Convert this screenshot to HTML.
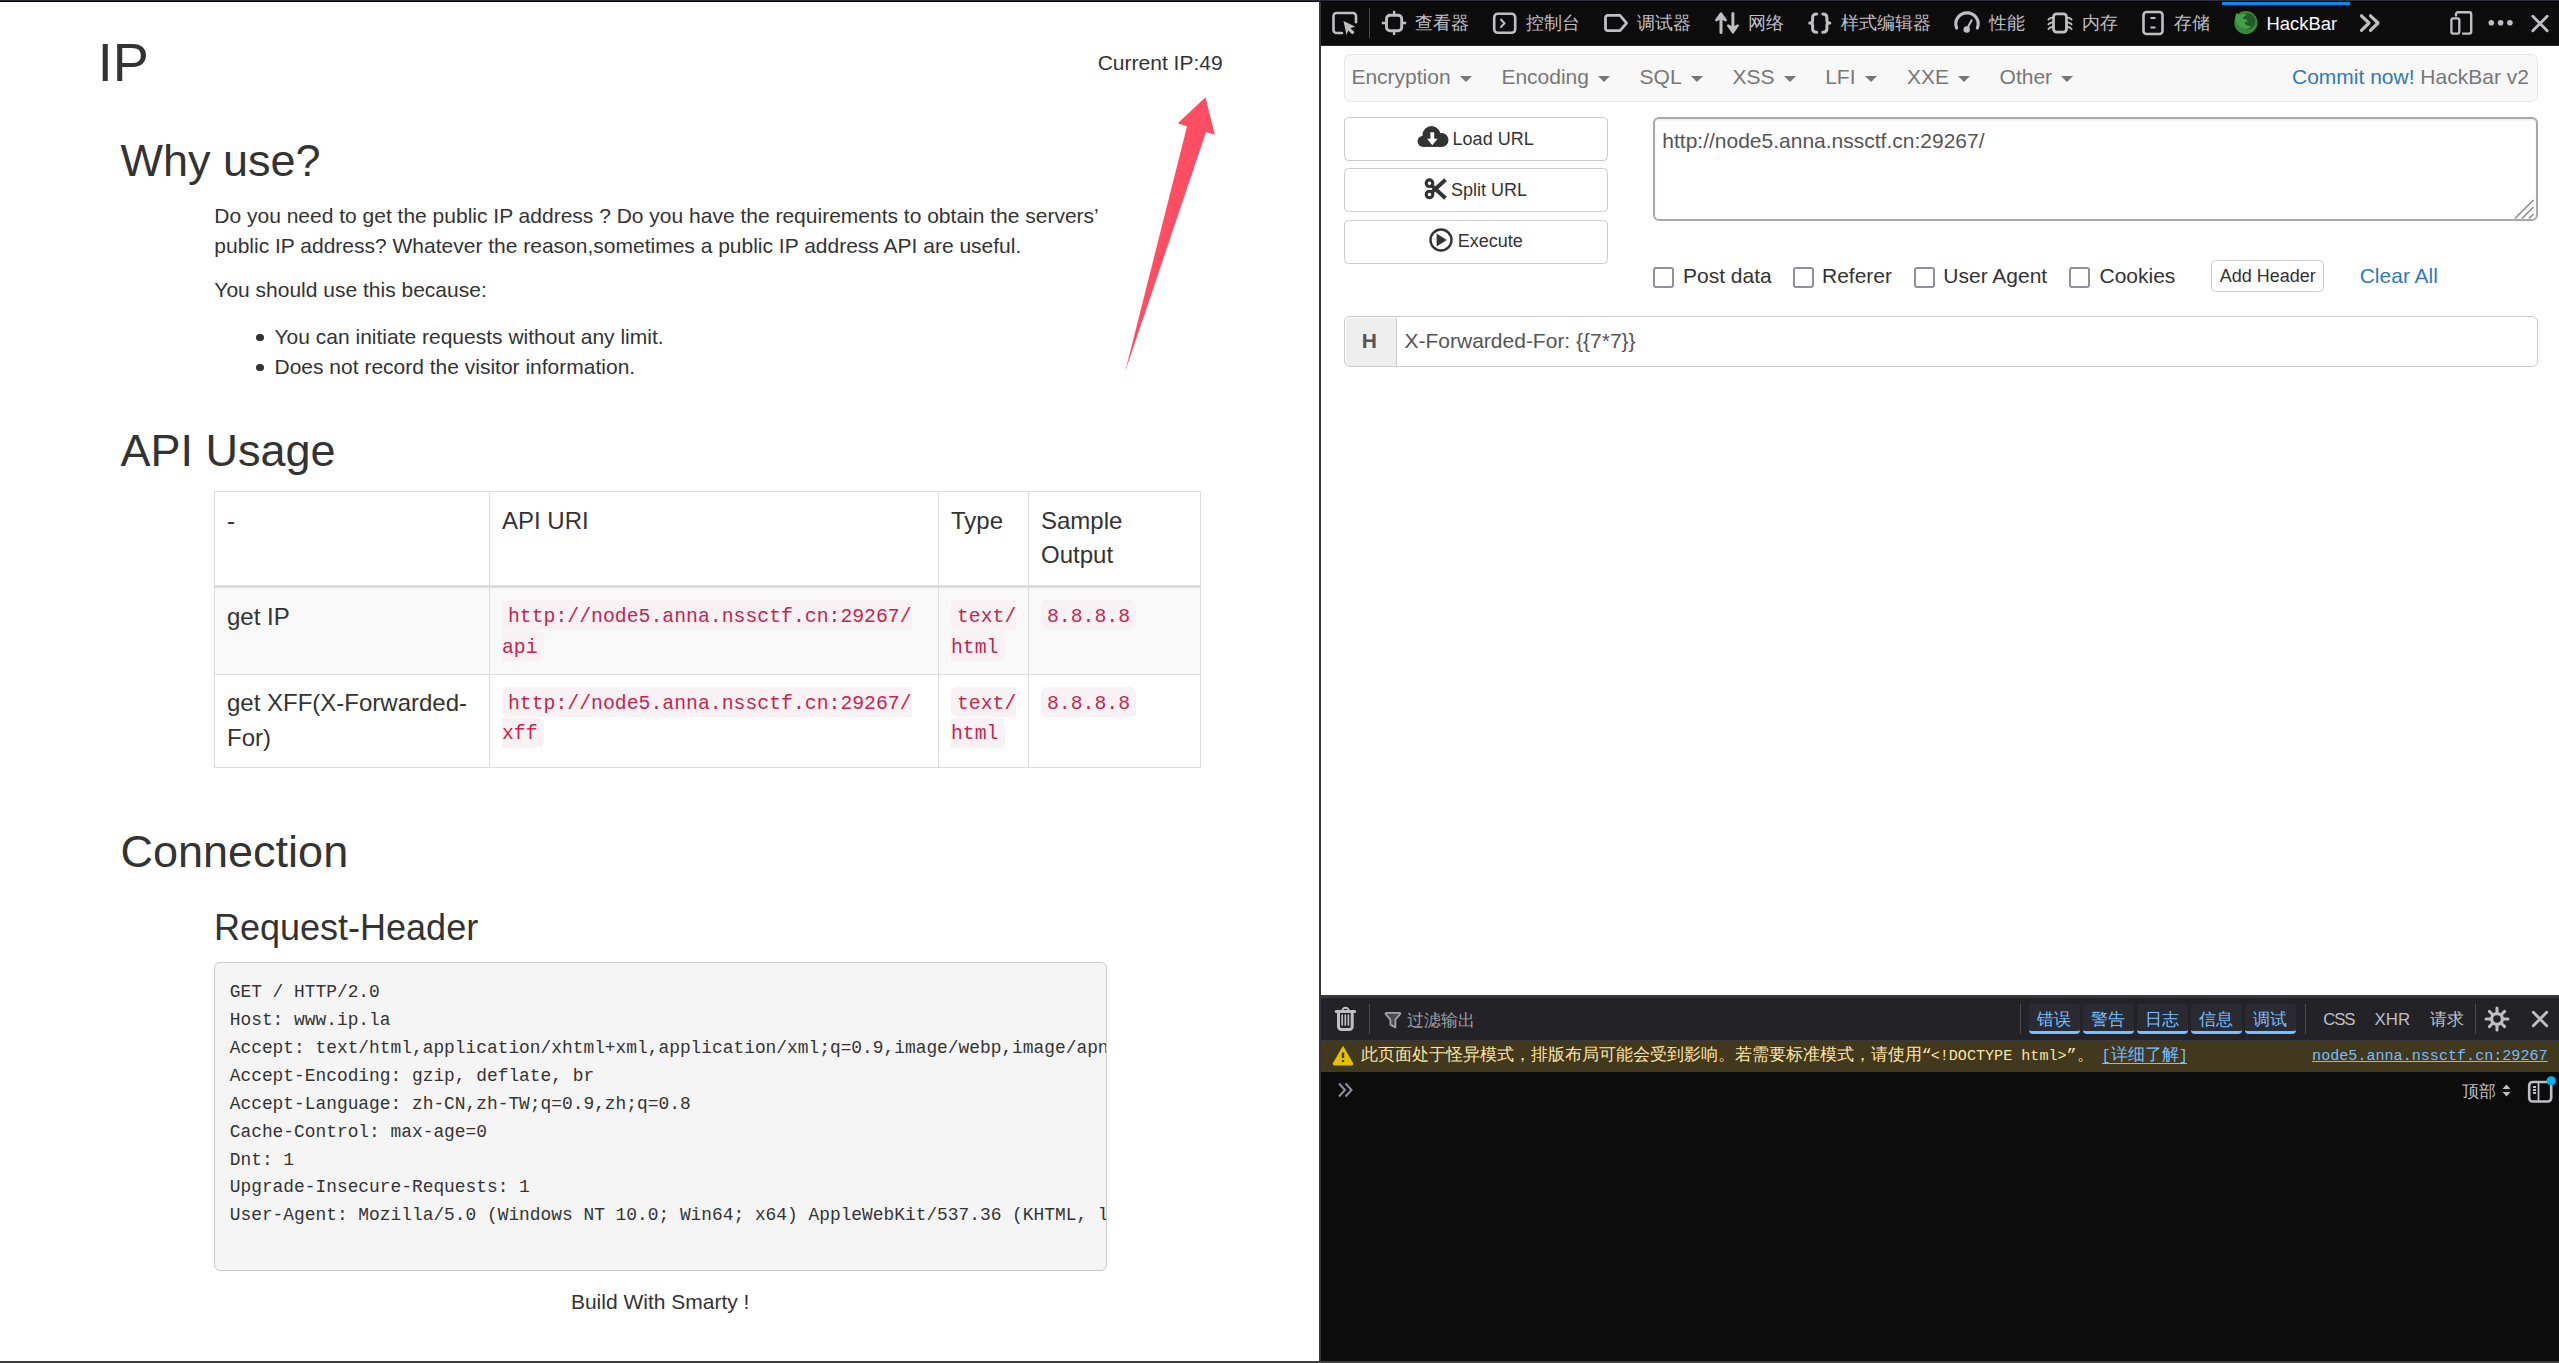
<!DOCTYPE html><html><head><meta charset="utf-8"><title>IP</title><style>
html,body{margin:0;padding:0}
body{width:2559px;height:1363px;overflow:hidden;position:relative;background:#fff;font-family:"Liberation Sans",sans-serif;}
.t{position:absolute;white-space:pre;}
.r{position:absolute;box-sizing:border-box;}
svg{position:absolute;overflow:visible}
</style></head><body>
<div class="t" style="left:97.80px;top:28.29px;font-size:54px;line-height:68px;color:#333;">IP</div>
<div class="t" style="left:1097.70px;top:49.72px;font-size:21px;line-height:26px;color:#333;">Current IP:49</div>
<div class="t" style="left:120.50px;top:133.41px;font-size:45px;line-height:56px;color:#333;">Why use?</div>
<div class="t" style="left:214.30px;top:202.72px;font-size:21px;line-height:26px;color:#333;">Do you need to get the public IP address ? Do you have the requirements to obtain the servers’</div>
<div class="t" style="left:214.30px;top:232.72px;font-size:21px;line-height:26px;color:#333;">public IP address? Whatever the reason,sometimes a public IP address API are useful.</div>
<div class="t" style="left:214.30px;top:277.42px;font-size:21px;line-height:26px;color:#333;">You should use this because:</div>
<div class="r" style="left:256.1px;top:333.5px;width:7.6px;height:7.6px;border-radius:50%;background:#333;"></div>
<div class="t" style="left:274.50px;top:323.52px;font-size:21px;line-height:26px;color:#333;">You can initiate requests without any limit.</div>
<div class="r" style="left:256.1px;top:363.5px;width:7.6px;height:7.6px;border-radius:50%;background:#333;"></div>
<div class="t" style="left:274.50px;top:353.52px;font-size:21px;line-height:26px;color:#333;">Does not record the visitor information.</div>
<div class="t" style="left:120.50px;top:423.41px;font-size:45px;line-height:56px;color:#333;">API Usage</div>
<div class="r" style="left:214px;top:491px;width:987px;height:277px;border:1px solid #ddd;"></div>
<div class="r" style="left:215px;top:588px;width:985px;height:86px;background:#f9f9f9;"></div>
<div class="r" style="left:215px;top:585px;width:985px;height:3px;background:#ddd;"></div>
<div class="r" style="left:215px;top:674px;width:985px;height:1px;background:#ddd;"></div>
<div class="r" style="left:489px;top:492px;width:1px;height:275px;background:#ddd;"></div>
<div class="r" style="left:938px;top:492px;width:1px;height:275px;background:#ddd;"></div>
<div class="r" style="left:1028px;top:492px;width:1px;height:275px;background:#ddd;"></div>
<div class="t" style="left:227.00px;top:506.38px;font-size:24px;line-height:30px;color:#333;">-</div>
<div class="t" style="left:502.00px;top:506.38px;font-size:24px;line-height:30px;color:#333;">API URI</div>
<div class="t" style="left:951.00px;top:506.38px;font-size:24px;line-height:30px;color:#333;">Type</div>
<div class="t" style="left:1041.00px;top:506.38px;font-size:24px;line-height:30px;color:#333;">Sample</div>
<div class="t" style="left:1041.00px;top:540.38px;font-size:24px;line-height:30px;color:#333;">Output</div>
<div class="t" style="left:227.00px;top:602.38px;font-size:24px;line-height:30px;color:#333;">get IP</div>
<div class="t" style="left:227.00px;top:688.18px;font-size:24px;line-height:30px;color:#333;">get XFF(X-Forwarded-</div>
<div class="t" style="left:227.00px;top:723.18px;font-size:24px;line-height:30px;color:#333;">For)</div>
<div class="r" style="left:502px;top:600.4px;width:409.92px;height:30px;background:#f9f2f4;border-radius:6px 0px 0px 6px;"></div>
<div class="t" style="left:508.00px;top:604.83px;font-size:19.8px;line-height:25px;color:#c7254e;font-family:'Liberation Mono', monospace;letter-spacing:0px;">http://node5.anna.nssctf.cn:29267/</div>
<div class="r" style="left:502px;top:631.3px;width:41.64px;height:30px;background:#f9f2f4;border-radius:0px 6px 6px 0px;"></div>
<div class="t" style="left:502.00px;top:635.63px;font-size:19.8px;line-height:25px;color:#c7254e;font-family:'Liberation Mono', monospace;letter-spacing:0px;">api</div>
<div class="r" style="left:951px;top:600.4px;width:65.4px;height:30px;background:#f9f2f4;border-radius:6px 0px 0px 6px;"></div>
<div class="t" style="left:957.00px;top:604.83px;font-size:19.8px;line-height:25px;color:#c7254e;font-family:'Liberation Mono', monospace;letter-spacing:0px;">text/</div>
<div class="r" style="left:951px;top:631.3px;width:53.52px;height:30px;background:#f9f2f4;border-radius:0px 6px 6px 0px;"></div>
<div class="t" style="left:951.00px;top:635.63px;font-size:19.8px;line-height:25px;color:#c7254e;font-family:'Liberation Mono', monospace;letter-spacing:0px;">html</div>
<div class="r" style="left:1041px;top:600.4px;width:95.16px;height:30px;background:#f9f2f4;border-radius:6px 6px 6px 6px;"></div>
<div class="t" style="left:1047.00px;top:604.83px;font-size:19.8px;line-height:25px;color:#c7254e;font-family:'Liberation Mono', monospace;letter-spacing:0px;">8.8.8.8</div>
<div class="r" style="left:502px;top:687.0px;width:409.92px;height:30px;background:#f9f2f4;border-radius:6px 0px 0px 6px;"></div>
<div class="t" style="left:508.00px;top:692.03px;font-size:19.8px;line-height:25px;color:#c7254e;font-family:'Liberation Mono', monospace;letter-spacing:0px;">http://node5.anna.nssctf.cn:29267/</div>
<div class="r" style="left:502px;top:717.9px;width:41.64px;height:30px;background:#f9f2f4;border-radius:0px 6px 6px 0px;"></div>
<div class="t" style="left:502.00px;top:722.13px;font-size:19.8px;line-height:25px;color:#c7254e;font-family:'Liberation Mono', monospace;letter-spacing:0px;">xff</div>
<div class="r" style="left:951px;top:687.0px;width:65.4px;height:30px;background:#f9f2f4;border-radius:6px 0px 0px 6px;"></div>
<div class="t" style="left:957.00px;top:692.03px;font-size:19.8px;line-height:25px;color:#c7254e;font-family:'Liberation Mono', monospace;letter-spacing:0px;">text/</div>
<div class="r" style="left:951px;top:717.9px;width:53.52px;height:30px;background:#f9f2f4;border-radius:0px 6px 6px 0px;"></div>
<div class="t" style="left:951.00px;top:722.13px;font-size:19.8px;line-height:25px;color:#c7254e;font-family:'Liberation Mono', monospace;letter-spacing:0px;">html</div>
<div class="r" style="left:1041px;top:687.0px;width:95.16px;height:30px;background:#f9f2f4;border-radius:6px 6px 6px 6px;"></div>
<div class="t" style="left:1047.00px;top:692.03px;font-size:19.8px;line-height:25px;color:#c7254e;font-family:'Liberation Mono', monospace;letter-spacing:0px;">8.8.8.8</div>
<div class="t" style="left:120.50px;top:824.41px;font-size:45px;line-height:56px;color:#333;">Connection</div>
<div class="t" style="left:214.00px;top:905.03px;font-size:36px;line-height:45px;color:#333;">Request-Header</div>
<div class="r" style="left:214px;top:962px;width:893px;height:309px;background:#f5f5f5;border:1.5px solid #ccc;border-radius:6px;"></div>
<div style="position:absolute;left:215.5px;top:963.5px;width:890px;height:306px;overflow:hidden;">
<div class="t" style="left:14.25px;top:17.84px;font-size:17.87px;line-height:22px;color:#333;font-family:'Liberation Mono', monospace;">GET / HTTP/2.0</div>
<div class="t" style="left:14.25px;top:45.70px;font-size:17.87px;line-height:22px;color:#333;font-family:'Liberation Mono', monospace;">Host: www.ip.la</div>
<div class="t" style="left:14.25px;top:73.56px;font-size:17.87px;line-height:22px;color:#333;font-family:'Liberation Mono', monospace;">Accept: text/html,application/xhtml+xml,application/xml;q=0.9,image/webp,image/apng,*/*;q=0.8</div>
<div class="t" style="left:14.25px;top:101.42px;font-size:17.87px;line-height:22px;color:#333;font-family:'Liberation Mono', monospace;">Accept-Encoding: gzip, deflate, br</div>
<div class="t" style="left:14.25px;top:129.28px;font-size:17.87px;line-height:22px;color:#333;font-family:'Liberation Mono', monospace;">Accept-Language: zh-CN,zh-TW;q=0.9,zh;q=0.8</div>
<div class="t" style="left:14.25px;top:157.14px;font-size:17.87px;line-height:22px;color:#333;font-family:'Liberation Mono', monospace;">Cache-Control: max-age=0</div>
<div class="t" style="left:14.25px;top:185.00px;font-size:17.87px;line-height:22px;color:#333;font-family:'Liberation Mono', monospace;">Dnt: 1</div>
<div class="t" style="left:14.25px;top:212.86px;font-size:17.87px;line-height:22px;color:#333;font-family:'Liberation Mono', monospace;">Upgrade-Insecure-Requests: 1</div>
<div class="t" style="left:14.25px;top:240.72px;font-size:17.87px;line-height:22px;color:#333;font-family:'Liberation Mono', monospace;">User-Agent: Mozilla/5.0 (Windows NT 10.0; Win64; x64) AppleWebKit/537.36 (KHTML, like Gecko) Chrome</div>
</div>
<div class="t" style="left:570.90px;top:1288.72px;font-size:21px;line-height:26px;color:#333;">Build With Smarty !</div>
<svg style="left:0;top:0" width="1320" height="400"><polygon points="1205.5,97.3 1214.8,134.7 1206,132.1 1125.2,371.6 1187,126.4 1177.8,123.3" fill="#ff4e64"/></svg>
<div class="r" style="left:0px;top:0px;width:2559px;height:1px;background:#2e2c36;"></div>
<div class="r" style="left:0px;top:1px;width:2559px;height:1px;background:#050508;"></div>
<div class="r" style="left:0px;top:1361px;width:2559px;height:2px;background:#3d3d3d;"></div>
<div class="r" style="left:1319px;top:2px;width:2px;height:1359px;background:#36353c;"></div>
<div class="r" style="left:1321px;top:2px;width:1238px;height:43px;background:#0c0c0d;"></div>
<div class="r" style="left:1321px;top:45px;width:1238px;height:1px;background:#2b2a33;"></div>
<svg style="left:1331px;top:11px" width="28" height="26" viewBox="0 0 28 26"><path d="M11 22 H5.5 a3 3 0 0 1 -3 -3 V5 a3 3 0 0 1 3 -3 H22 a3 3 0 0 1 3 3 V11.2" fill="none" stroke="#bfbfc3" stroke-width="2.6" stroke-linecap="round"/><path d="M12.5 10 L24 15.5 L19.5 17.2 L23.6 21.3 L21.3 23.6 L17.2 19.5 L15.5 24 Z" fill="#bfbfc3"/></svg>
<div class="r" style="left:1369px;top:8px;width:1.2px;height:30px;background:#4a4a4f;"></div>
<svg style="left:1380px;top:9px" width="28" height="28" viewBox="0 0 28 28"><rect x="6.5" y="6.3" width="15.2" height="15.4" rx="3.5" fill="none" stroke="#bfbfc3" stroke-width="2.9"/><path d="M14.1 1.8 V6 M14.1 21.7 V26 M1.8 14 H6 M21.7 14 H26.2" stroke="#bfbfc3" stroke-width="2.4"/></svg>
<div class="t" style="left:1415.00px;top:12.66px;font-size:18px;line-height:20px;color:#bfbfc3;">查看器</div>
<svg style="left:1491px;top:11px" width="28" height="25" viewBox="0 0 28 25"><rect x="3.2" y="2.8" width="21" height="19" rx="3.5" fill="none" stroke="#bfbfc3" stroke-width="2.6"/><path d="M9.5 8 L13.5 12.3 L9.5 16.6" fill="none" stroke="#bfbfc3" stroke-width="2"/></svg>
<div class="t" style="left:1525.50px;top:12.66px;font-size:18px;line-height:20px;color:#bfbfc3;">控制台</div>
<svg style="left:1602px;top:12px" width="30" height="22" viewBox="0 0 30 22"><path d="M5.7 3.4 H18 L24.6 11.05 L18 18.7 H5.7 a2.2 2.2 0 0 1 -2.2 -2.2 V5.6 a2.2 2.2 0 0 1 2.2 -2.2 Z" fill="none" stroke="#bfbfc3" stroke-width="2.8" stroke-linejoin="round"/></svg>
<div class="t" style="left:1637.00px;top:12.66px;font-size:18px;line-height:20px;color:#bfbfc3;">调试器</div>
<svg style="left:1712px;top:10px" width="30" height="26" viewBox="0 0 30 26"><path d="M9 22.4 V8 M20.9 3.5 V18" stroke="#bfbfc3" stroke-width="3" stroke-linecap="round"/><path d="M4.3 10.3 L9 3.4 L13.7 10.3 L10.6 8.7 H7.4 Z M16.2 15.6 L20.9 22.4 L25.6 15.6 L22.5 17.2 H19.3 Z" fill="#bfbfc3" stroke="#bfbfc3" stroke-width="2.4" stroke-linejoin="round"/></svg>
<div class="t" style="left:1748.00px;top:12.66px;font-size:18px;line-height:20px;color:#bfbfc3;">网络</div>
<svg style="left:1806px;top:10px" width="28" height="27" viewBox="0 0 28 27"><path d="M10.7 4 C8 4 6.6 5 6.6 7.5 V10.8 C6.6 12.3 5.6 13 3.7 13 C5.6 13 6.6 13.7 6.6 15.2 V19 C6.6 21.4 8 22.2 10.7 22.2 M16.8 4 C19.5 4 20.9 5 20.9 7.5 V10.8 C20.9 12.3 21.9 13 23.8 13 C21.9 13 20.9 13.7 20.9 15.2 V19 C20.9 21.4 19.5 22.2 16.8 22.2" fill="none" stroke="#bfbfc3" stroke-width="3" stroke-linecap="round" stroke-linejoin="round"/></svg>
<div class="t" style="left:1841.00px;top:12.66px;font-size:18px;line-height:20px;color:#bfbfc3;">样式编辑器</div>
<svg style="left:1952px;top:8px" width="30" height="27" viewBox="0 0 30 27"><path d="M4.6 20 A11.16 11.16 0 1 1 25.4 20" fill="none" stroke="#bfbfc3" stroke-width="3.2" stroke-linecap="round"/><path d="M14.7 21.5 L19.6 12.2" stroke="#bfbfc3" stroke-width="2" stroke-linecap="round"/><circle cx="14.7" cy="21.5" r="3.2" fill="#bfbfc3"/></svg>
<div class="t" style="left:1988.50px;top:12.66px;font-size:18px;line-height:20px;color:#bfbfc3;">性能</div>
<svg style="left:2046px;top:10px" width="28" height="26" viewBox="0 0 28 26"><rect x="7.5" y="3.9" width="13" height="18.2" rx="3" fill="none" stroke="#bfbfc3" stroke-width="2.8"/><path d="M6.5 7.6 Q4 7.6 2.4 9.6 M6.5 12.4 Q4 12.4 2.4 14.4 M6.5 17 Q4 17 2.4 19 M21.5 7.6 Q24 7.6 25.6 9.6 M21.5 12.4 Q24 12.4 25.6 14.4 M21.5 17 Q24 17 25.6 19" fill="none" stroke="#bfbfc3" stroke-width="1.8" stroke-linecap="round"/></svg>
<div class="t" style="left:2081.50px;top:12.66px;font-size:18px;line-height:20px;color:#bfbfc3;">内存</div>
<svg style="left:2140px;top:9px" width="26" height="28" viewBox="0 0 26 28"><rect x="3.5" y="3" width="19" height="22" rx="3" fill="none" stroke="#bfbfc3" stroke-width="2.6"/><path d="M10.5 9 H15.5 M10.5 18.5 H15.5" stroke="#bfbfc3" stroke-width="2.2"/></svg>
<div class="t" style="left:2173.50px;top:12.66px;font-size:18px;line-height:20px;color:#bfbfc3;">存储</div>
<div class="r" style="left:2222px;top:2px;width:128px;height:3px;background:#0a84ff;"></div>
<svg style="left:2232px;top:10px" width="28" height="26" viewBox="0 0 28 26"><circle cx="13.9" cy="12.6" r="11.6" fill="#358a3a"/><circle cx="15.2" cy="11.4" r="8.2" fill="#24592a"/><path d="M3.2 6.5 L4.8 2.8 L7.5 5.5 C10 3.5 13 3.6 15 5 C12.5 5.5 11 7 11.2 9 C13.5 8.5 15.8 9.5 15.6 12 C14.2 11.6 12.8 12 12.8 13.4 C14.5 15.5 17 16.5 19.5 16 C17.5 19 12.5 20 9 17.5 C5 15 3.2 10.5 3.2 6.5 Z" fill="#43a048"/></svg>
<div class="t" style="left:2266.60px;top:11.92px;font-size:18.4px;line-height:23px;color:#fbfbfe;">HackBar</div>
<svg style="left:2357px;top:12px" width="26" height="22" viewBox="0 0 26 22"><path d="M4.5 3.8 L12 11 L4.5 18.3 M13.5 3.8 L21 11 L13.5 18.3" fill="none" stroke="#bfbfc3" stroke-width="3.2" stroke-linecap="round" stroke-linejoin="round"/></svg>
<svg style="left:2448px;top:9px" width="28" height="29" viewBox="0 0 28 29"><path d="M8 7.5 V5.3 a2 2 0 0 1 2 -2 H21.2 a2 2 0 0 1 2 2 V22.6 a2 2 0 0 1 -2 2 H14.1" fill="none" stroke="#bfbfc3" stroke-width="2.4"/><rect x="3.4" y="9.3" width="7.9" height="15.3" rx="1.8" fill="none" stroke="#bfbfc3" stroke-width="2.3"/></svg>
<svg style="left:2486px;top:18px" width="30" height="10" viewBox="0 0 30 10"><circle cx="5.3" cy="4.8" r="2.8" fill="#bfbfc3"/><circle cx="14.6" cy="4.8" r="2.8" fill="#bfbfc3"/><circle cx="23.9" cy="4.8" r="2.8" fill="#bfbfc3"/></svg>
<svg style="left:2529px;top:13px" width="22" height="21" viewBox="0 0 22 21"><path d="M3.8 3.3 L18.2 17.7 M18.2 3.3 L3.8 17.7" stroke="#bfbfc3" stroke-width="2.9" stroke-linecap="round"/></svg>
<div class="r" style="left:1344px;top:54px;width:1194px;height:48px;background:#f8f8f8;border:1.5px solid #e7e7e7;border-radius:6px;"></div>
<div class="t" style="left:1351.40px;top:63.82px;font-size:21px;line-height:26px;color:#777;">Encryption</div>
<svg style="left:1460px;top:76px" width="12" height="6" viewBox="0 0 12 6"><path d="M0 0 H12 L6 6 Z" fill="#777"/></svg>
<div class="t" style="left:1501.40px;top:63.82px;font-size:21px;line-height:26px;color:#777;">Encoding</div>
<svg style="left:1598.1px;top:76px" width="12" height="6" viewBox="0 0 12 6"><path d="M0 0 H12 L6 6 Z" fill="#777"/></svg>
<div class="t" style="left:1639.60px;top:63.82px;font-size:21px;line-height:26px;color:#777;">SQL</div>
<svg style="left:1691.25px;top:76px" width="12" height="6" viewBox="0 0 12 6"><path d="M0 0 H12 L6 6 Z" fill="#777"/></svg>
<div class="t" style="left:1732.60px;top:63.82px;font-size:21px;line-height:26px;color:#777;">XSS</div>
<svg style="left:1784.4px;top:76px" width="12" height="6" viewBox="0 0 12 6"><path d="M0 0 H12 L6 6 Z" fill="#777"/></svg>
<div class="t" style="left:1825.20px;top:63.82px;font-size:21px;line-height:26px;color:#777;">LFI</div>
<svg style="left:1865px;top:76px" width="12" height="6" viewBox="0 0 12 6"><path d="M0 0 H12 L6 6 Z" fill="#777"/></svg>
<div class="t" style="left:1907.00px;top:63.82px;font-size:21px;line-height:26px;color:#777;">XXE</div>
<svg style="left:1958.1px;top:76px" width="12" height="6" viewBox="0 0 12 6"><path d="M0 0 H12 L6 6 Z" fill="#777"/></svg>
<div class="t" style="left:1999.60px;top:63.82px;font-size:21px;line-height:26px;color:#777;">Other</div>
<svg style="left:2060.6px;top:76px" width="12" height="6" viewBox="0 0 12 6"><path d="M0 0 H12 L6 6 Z" fill="#777"/></svg>
<div class="t" style="left:2292.00px;top:63.52px;font-size:21px;line-height:26px;color:#337ab7;">Commit now!<span style="color:#777"> HackBar v2</span></div>
<div class="r" style="left:1344px;top:117px;width:264px;height:44px;background:#fff;border:1.5px solid #ccc;border-radius:4.5px;"></div>
<div class="r" style="left:1344px;top:168px;width:264px;height:44px;background:#fff;border:1.5px solid #ccc;border-radius:4.5px;"></div>
<div class="r" style="left:1344px;top:220px;width:264px;height:44px;background:#fff;border:1.5px solid #ccc;border-radius:4.5px;"></div>
<svg style="left:1416px;top:125px" width="34" height="24" viewBox="0 0 34 24"><circle cx="15.5" cy="10" r="9" fill="#333"/><circle cx="25.5" cy="15" r="7" fill="#333"/><circle cx="7.2" cy="16.3" r="5.6" fill="#333"/><rect x="7.2" y="14" width="18.3" height="7.9" fill="#333"/><path d="M14.4 7.2 H18.2 V13.8 H21.6 L16.3 20.2 L11 13.8 H14.4 Z" fill="#fff"/></svg>
<div class="t" style="left:1452.60px;top:127.66px;font-size:18px;line-height:22px;color:#333;">Load URL</div>
<svg style="left:1423px;top:177px" width="25" height="24" viewBox="0 0 25 24"><circle cx="6.5" cy="6.2" r="3.3" fill="none" stroke="#333" stroke-width="3.1"/><circle cx="6.5" cy="17.5" r="3.3" fill="none" stroke="#333" stroke-width="3.1"/><path d="M8.8 8.6 L22.5 21.2 M8.8 15.2 L22.5 2.8" stroke="#333" stroke-width="3.9"/></svg>
<div class="t" style="left:1451.00px;top:178.76px;font-size:18px;line-height:22px;color:#333;">Split URL</div>
<svg style="left:1427px;top:227px" width="27" height="26" viewBox="0 0 27 26"><circle cx="14" cy="13" r="10.5" fill="none" stroke="#333" stroke-width="2.4"/><path d="M9.6 6.6 L19.8 13 L9.6 19.6 Z" fill="#333"/></svg>
<div class="t" style="left:1457.70px;top:230.36px;font-size:18px;line-height:22px;color:#333;">Execute</div>
<div class="r" style="left:1653px;top:117px;width:885px;height:104px;background:#fff;border:2px solid #a9a9a9;border-radius:6px;box-shadow:inset 0 1.5px 2px rgba(0,0,0,.08);"></div>
<div class="t" style="left:1662.30px;top:127.52px;font-size:21px;line-height:26px;color:#555;">http://node5.anna.nssctf.cn:29267/</div>
<svg style="left:2512px;top:197px" width="24" height="22" viewBox="0 0 24 22"><path d="M21.5 3 L3 21.5 M21.5 10 L10 21.5 M21.5 17 L17 21.5" stroke="#888" stroke-width="1.5"/></svg>
<div class="r" style="left:1653px;top:267px;width:20.6px;height:20.6px;background:#fff;border:2.4px solid #8f8f9d;border-radius:3px;"></div>
<div class="t" style="left:1683.00px;top:262.52px;font-size:21px;line-height:26px;color:#333;">Post data</div>
<div class="r" style="left:1793.3px;top:267px;width:20.6px;height:20.6px;background:#fff;border:2.4px solid #8f8f9d;border-radius:3px;"></div>
<div class="t" style="left:1822.00px;top:262.52px;font-size:21px;line-height:26px;color:#333;">Referer</div>
<div class="r" style="left:1914px;top:267px;width:20.6px;height:20.6px;background:#fff;border:2.4px solid #8f8f9d;border-radius:3px;"></div>
<div class="t" style="left:1943.30px;top:262.52px;font-size:21px;line-height:26px;color:#333;">User Agent</div>
<div class="r" style="left:2069.4px;top:267px;width:20.6px;height:20.6px;background:#fff;border:2.4px solid #8f8f9d;border-radius:3px;"></div>
<div class="t" style="left:2099.50px;top:262.52px;font-size:21px;line-height:26px;color:#333;">Cookies</div>
<div class="r" style="left:2211px;top:260px;width:113px;height:31.5px;background:#fff;border:1.5px solid #ccc;border-radius:4.5px;"></div>
<div class="t" style="left:2219.70px;top:264.76px;font-size:18px;line-height:22px;color:#333;">Add Header</div>
<div class="t" style="left:2359.70px;top:262.52px;font-size:21px;line-height:26px;color:#337ab7;">Clear All</div>
<div class="r" style="left:1344px;top:316px;width:1194px;height:51px;background:#fff;border:1.5px solid #ccc;border-radius:6px;"></div>
<div class="r" style="left:1345.5px;top:317.5px;width:51px;height:48px;background:#eee;border-right:1.5px solid #ccc;border-radius:4.5px 0 0 4.5px;"></div>
<div class="t" style="left:1361.80px;top:327.82px;font-size:21px;line-height:26px;color:#555;font-weight:bold;">H</div>
<div class="t" style="left:1404.50px;top:327.72px;font-size:21px;line-height:26px;color:#555;">X-Forwarded-For: {{7*7}}</div>
<div class="r" style="left:1321px;top:995px;width:1238px;height:3px;background:#38383d;"></div>
<div class="r" style="left:1321px;top:998px;width:1238px;height:42px;background:#232327;"></div>
<div class="r" style="left:1321px;top:1040px;width:1238px;height:1px;background:#38383d;"></div>
<div class="r" style="left:1321px;top:1041px;width:1238px;height:30px;background:#42381e;"></div>
<div class="r" style="left:1321px;top:1071px;width:1238px;height:1px;background:#38383d;"></div>
<div class="r" style="left:1321px;top:1072px;width:1238px;height:289px;background:#0c0c0d;"></div>
<svg style="left:1333px;top:1005px" width="25" height="28" viewBox="0 0 25 28"><path d="M3.2 6.6 H21.6" stroke="#bfbfc3" stroke-width="3" stroke-linecap="round"/><path d="M9.3 5.8 a3.2 3 0 0 1 6.4 0" fill="none" stroke="#bfbfc3" stroke-width="2"/><path d="M5.5 8 V21.5 a3 3 0 0 0 3 3 H16.2 a3 3 0 0 0 3 -3 V8" fill="none" stroke="#bfbfc3" stroke-width="3"/><path d="M9.2 10 V20 M12.3 10 V20 M15.4 10 V20" stroke="#bfbfc3" stroke-width="1.7" stroke-linecap="round"/></svg>
<div class="r" style="left:1369px;top:1004px;width:1.2px;height:30px;background:#4a4a4f;"></div>
<svg style="left:1384px;top:1010px" width="18" height="19" viewBox="0 0 18 19"><path d="M2.8 2.8 H15.2 Q16.9 2.8 15.9 4.3 L11.4 9.6 V17.4 L6.4 14.6 V9.6 L1.9 4.3 Q0.9 2.8 2.8 2.8 Z" fill="#4b4b51" stroke="#a2a2a8" stroke-width="1.8" stroke-linejoin="round"/></svg>
<div class="t" style="left:1407.00px;top:1010.58px;font-size:16.5px;line-height:18px;color:#9f9fa6;">过滤输出</div>
<div class="r" style="left:2020px;top:1004px;width:1.2px;height:30px;background:#4a4a4f;"></div>
<div class="r" style="left:2028.8px;top:1004px;width:51px;height:30.3px;background:#2a2a33;border-radius:4px;border-bottom:3.3px solid #75bfff;"></div>
<div class="t" style="left:2037.40px;top:1011.31px;font-size:17px;line-height:18px;color:#75bfff;">错误</div>
<div class="r" style="left:2082.8px;top:1004px;width:51px;height:30.3px;background:#2a2a33;border-radius:4px;border-bottom:3.3px solid #75bfff;"></div>
<div class="t" style="left:2091.40px;top:1011.31px;font-size:17px;line-height:18px;color:#75bfff;">警告</div>
<div class="r" style="left:2136.8px;top:1004px;width:51px;height:30.3px;background:#2a2a33;border-radius:4px;border-bottom:3.3px solid #75bfff;"></div>
<div class="t" style="left:2145.40px;top:1011.31px;font-size:17px;line-height:18px;color:#75bfff;">日志</div>
<div class="r" style="left:2190.8px;top:1004px;width:51px;height:30.3px;background:#2a2a33;border-radius:4px;border-bottom:3.3px solid #75bfff;"></div>
<div class="t" style="left:2199.40px;top:1011.31px;font-size:17px;line-height:18px;color:#75bfff;">信息</div>
<div class="r" style="left:2244.8px;top:1004px;width:51px;height:30.3px;background:#2a2a33;border-radius:4px;border-bottom:3.3px solid #75bfff;"></div>
<div class="t" style="left:2253.40px;top:1011.31px;font-size:17px;line-height:18px;color:#75bfff;">调试</div>
<div class="r" style="left:2305px;top:1004px;width:1.2px;height:30px;background:#4a4a4f;"></div>
<div class="t" style="left:2323.20px;top:1009.28px;font-size:16.8px;line-height:21px;color:#bfbfc3;letter-spacing:-1.1px;">CSS</div>
<div class="t" style="left:2374.60px;top:1009.28px;font-size:16.8px;line-height:21px;color:#bfbfc3;">XHR</div>
<div class="t" style="left:2430.00px;top:1011.11px;font-size:17px;line-height:18px;color:#bfbfc3;">请求</div>
<div class="r" style="left:2475px;top:1004px;width:1.2px;height:30px;background:#4a4a4f;"></div>
<svg style="left:2484px;top:1006px" width="26" height="26" viewBox="0 0 26 26"><circle cx="13" cy="13" r="5.4" fill="none" stroke="#bfbfc3" stroke-width="3.2"/><path d="M13 2 V6 M13 20 V24 M2 13 H6 M20 13 H24 M5.4 5.4 L8 8 M18 18 L20.6 20.6 M5.4 20.6 L8 18 M18 8 L20.6 5.4" stroke="#bfbfc3" stroke-width="3" stroke-linecap="round"/></svg>
<svg style="left:2530px;top:1009px" width="20" height="20" viewBox="0 0 20 20"><path d="M3.3 3.3 L16.7 16.7 M16.7 3.3 L3.3 16.7" stroke="#bfbfc3" stroke-width="2.9" stroke-linecap="round"/></svg>
<svg style="left:1332px;top:1045px" width="22" height="21" viewBox="0 0 22 21"><path d="M11 2 L20.5 18.5 a1 1 0 0 1 -1 1.2 H2.5 a1 1 0 0 1 -1 -1.2 Z" fill="#e3c000" stroke="#e3c000" stroke-width="1.5" stroke-linejoin="round"/><path d="M11 7.5 V13" stroke="#42381e" stroke-width="2.4"/><circle cx="11" cy="16" r="1.3" fill="#42381e"/></svg>
<div class="t" style="left:1360.60px;top:1046.03px;font-size:16.8px;line-height:20px;color:#fce5a5;font-family:'Liberation Mono', monospace;">此页面处于怪异模式，排版布局可能会受到影响。若需要标准模式，请使用“</div>
<div class="t" style="left:1930.70px;top:1046.48px;font-size:15.1px;line-height:20px;color:#fce5a5;font-family:'Liberation Mono', monospace;">&lt;!DOCTYPE html&gt;</div>
<div class="t" style="left:2066.50px;top:1046.03px;font-size:16.8px;line-height:20px;color:#fce5a5;font-family:'Liberation Mono', monospace;">”。</div>
<div class="t" style="left:2101.60px;top:1046.03px;font-size:16.8px;line-height:20px;color:#75bfff;font-family:'Liberation Mono', monospace;"><span style="font-size:15.1px">[</span>详细了解<span style="font-size:15.1px">]</span></div>
<div class="r" style="left:2101.6px;top:1063px;width:85px;height:1.2px;background:#75bfff;"></div>
<div class="t" style="left:2312.10px;top:1046.48px;font-size:15.1px;line-height:20px;color:#75bfff;font-family:'Liberation Mono', monospace;text-decoration:underline;">node5.anna.nssctf.cn:29267</div>
<svg style="left:1336px;top:1081px" width="20" height="18" viewBox="0 0 20 18"><path d="M3 2.5 L9 9 L3 15.5 M9.5 2.5 L15.5 9 L9.5 15.5" fill="none" stroke="#8f8f9d" stroke-width="2"/></svg>
<div class="t" style="left:2462.40px;top:1082.28px;font-size:16.5px;line-height:18px;color:#bfbfc3;">顶部</div>
<svg style="left:2502px;top:1084px" width="10" height="14" viewBox="0 0 10 14"><path d="M4.5 0.5 L8.5 5 H0.5 Z M0.5 8 H8.5 L4.5 12.5 Z" fill="#bfbfc3"/></svg>
<svg style="left:2526px;top:1078px" width="32" height="26" viewBox="0 0 32 26"><rect x="3.2" y="4" width="22" height="19.5" rx="3.5" fill="none" stroke="#bfbfc3" stroke-width="2.6"/><path d="M12.5 4.5 V23 M7 9 H10 M7 12 H10 M7 15 H10" stroke="#bfbfc3" stroke-width="1.8"/><circle cx="25.2" cy="2.8" r="4.6" fill="#00b3f4"/></svg>
</body></html>
